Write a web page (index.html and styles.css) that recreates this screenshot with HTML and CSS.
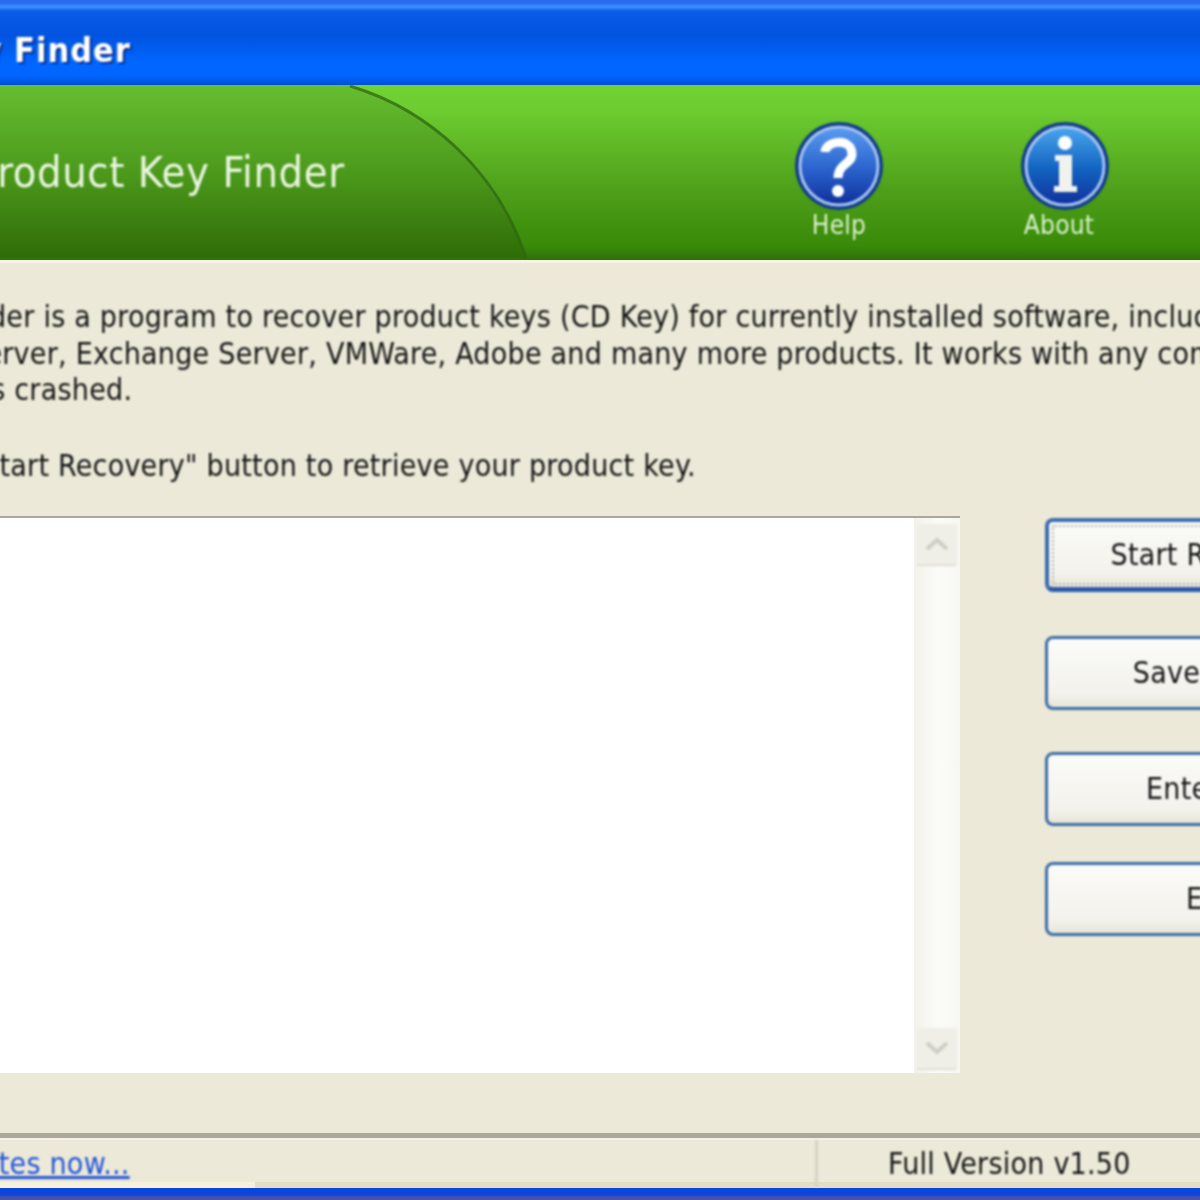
FILE: index.html
```html
<!DOCTYPE html>
<html lang="en">
<head>
    <meta charset="UTF-8">
    <title>Product Key Finder</title>
    <link rel="stylesheet" href="styles.css">
</head>
<body>
    <div class="window">
        <div class="title-bar">
            <span class="title-text">Product Key Finder</span>
        </div>

        <div class="banner">
            <svg class="banner-curve" width="540" height="175" viewBox="0 0 540 175">
                <defs>
                    <linearGradient id="curveFill" x1="0" y1="0" x2="0" y2="1">
                        <stop offset="0" stop-color="#66be30"/>
                        <stop offset="0.5" stop-color="#4c9a1c"/>
                        <stop offset="1" stop-color="#2f6c07"/>
                    </linearGradient>
                </defs>
                <path d="M0 0H350C430 24 498 86 527 173H0Z" fill="url(#curveFill)"/>
                <path d="M350 1C430 25 498 87 526 173" fill="none" stroke="#2f6a12" stroke-opacity="0.75" stroke-width="3"/>
            </svg>
            <span class="banner-title">Product Key Finder</span>
            <div class="banner-actions">
                <div class="action">
                    <svg class="action-icon" width="92" height="92" viewBox="0 0 92 92">
                        <defs>
                            <linearGradient id="helpFill" x1="0" y1="0" x2="0" y2="1">
                                <stop offset="0" stop-color="#5a9cf0"/>
                                <stop offset="0.55" stop-color="#2a62cc"/>
                                <stop offset="1" stop-color="#0f2f9c"/>
                            </linearGradient>
                        </defs>
                        <circle cx="46" cy="46" r="44" fill="#0f3c8c"/>
                        <circle cx="46" cy="46" r="39" fill="url(#helpFill)" stroke="#a9c4f2" stroke-width="3"/>
                        <path d="M32 32C33 20 58 18 59 33C60 44 45 43 45 58" fill="none" stroke="#fff" stroke-width="9"/>
                        <circle cx="45" cy="71" r="6" fill="#fff"/>
                    </svg>
                    <span class="action-label">Help</span>
                </div>
                <div class="action">
                    <svg class="action-icon" width="92" height="92" viewBox="0 0 92 92">
                        <defs>
                            <linearGradient id="aboutFill" x1="0" y1="0" x2="0" y2="1">
                                <stop offset="0" stop-color="#4aa6ee"/>
                                <stop offset="0.55" stop-color="#1162c0"/>
                                <stop offset="1" stop-color="#12309a"/>
                            </linearGradient>
                        </defs>
                        <circle cx="46" cy="46" r="44" fill="#0f3c8c"/>
                        <circle cx="46" cy="46" r="39" fill="url(#aboutFill)" stroke="#a9c4f2" stroke-width="3"/>
                        <circle cx="46" cy="23" r="7" fill="#fff"/>
                        <path d="M36 35H53V66H58V72H35V66H40V41H36Z" fill="#f2f2ec"/>
                    </svg>
                    <span class="action-label about-label">About</span>
                </div>
            </div>
        </div>

        <div class="content">
            <p class="intro">
                <span class="line">Product Key Finder is a program to recover product keys (CD Key) for currently installed software, including</span>
                <span class="line line-2">Windows Server, Exchange Server, VMWare, Adobe and many more products. It works with any computer</span>
                <span class="line line-3">Windows has crashed.</span>
            </p>
            <p class="hint">Click "Start Recovery" button to retrieve your product key.</p>

            <div class="work-area">
                <div class="list-box">
                    <div class="list-body"></div>
                    <div class="scrollbar">
                        <div class="scroll-btn">
                            <svg width="26" height="14" viewBox="0 0 26 14"><path d="M3 12L13 3L23 12" fill="none" stroke="#cfcfc4" stroke-width="4"/></svg>
                        </div>
                        <div class="scroll-btn">
                            <svg width="26" height="14" viewBox="0 0 26 14"><path d="M3 2L13 11L23 2" fill="none" stroke="#cfcfc4" stroke-width="4"/></svg>
                        </div>
                    </div>
                </div>
                <div class="buttons">
                    <button class="btn btn-default">Start Recovery</button>
                    <button class="btn btn-save">Save to File</button>
                    <button class="btn btn-enter">Enter Key</button>
                    <button class="btn btn-exit">Exit</button>
                </div>
            </div>
        </div>

        <div class="status-bar">
            <a class="status-link" href="#">Check for updates now...</a>
            <span class="status-version">Full Version v1.50</span>
        </div>
        <div class="bottom-edge"></div>
    </div>
</body>
</html>
```

FILE: styles.css
```css
* {
    box-sizing: border-box;
    margin: 0;
    padding: 0;
}

body {
    width: 1200px;
    height: 1200px;
    overflow: hidden;
    background: #ece9d8;
    font-family: "DejaVu Sans Condensed", "DejaVu Sans", sans-serif;
    font-stretch: condensed;
    font-size: 30px;
    letter-spacing: 0.25px;
    color: #151515;
}

.window {
    width: 1200px;
    height: 1200px;
    overflow: hidden;
    display: flex;
    flex-direction: column;
    background: #ece9d8;
}

/* the source is an upscaled small screenshot, so text and icons are soft */
.title-text,
.banner-title,
.action-icon,
.action-label,
.line,
.hint,
.scroll-btn,
.btn,
.status-link,
.status-version {
    filter: blur(0.8px);
}

.title-bar {
    height: 85px;
    flex-shrink: 0;
    display: flex;
    align-items: center;
    padding-top: 14px;
    background: linear-gradient(180deg, #2a6cf0 0, #2a6cf0 3px, #3c94ff 7px, #0a5ce8 11px, #0254e0 36px, #0066ff 62px, #0066ff 76px, #0050d4 85px);
}

.title-text {
    margin-left: -218px;
    font-size: 34px;
    font-weight: 700;
    letter-spacing: 1px;
    color: #fff;
    white-space: nowrap;
    text-shadow: 2px 2px 1px #0a2c90;
}

.banner {
    position: relative;
    height: 175px;
    flex-shrink: 0;
    display: flex;
    align-items: flex-start;
    background: linear-gradient(180deg, #72d335 0, #6ccc30 15%, #4f9f1a 60%, #388a08 92%, #2f7008 100%);
}

.banner-curve {
    position: absolute;
    left: 0;
    top: 0;
}

.banner-title {
    position: relative;
    margin: 62px 0 0 -26px;
    font-size: 43px;
    letter-spacing: 0.6px;
    color: #eaf5e0;
    white-space: nowrap;
}

.banner-actions {
    position: relative;
    margin-left: auto;
    margin-right: 89px;
    display: flex;
    gap: 134px;
    padding-top: 35px;
}

.action {
    width: 92px;
    display: flex;
    flex-direction: column;
    align-items: center;
}

.action-label {
    margin-top: -5px;
    font-size: 26px;
    line-height: 36px;
    color: #dcf2d0;
}

.about-label {
    margin-right: 12px;
}

.content {
    flex: 1;
    border-top: 3px solid #f6f3e6;
    padding-top: 36px;
}

.intro,
.hint {
    line-height: 36.7px;
    white-space: nowrap;
}

.line {
    display: block;
    margin-left: -221px;
}

.line-2 {
    margin-left: -163px;
}

.line-3 {
    margin-left: -174px;
}

.hint {
    margin: 39px 0 0 -105px;
}

.work-area {
    display: flex;
    margin-top: 31px;
    gap: 85px;
}

.list-box {
    width: 960px;
    height: 557px;
    flex-shrink: 0;
    display: flex;
    border-top: 2px solid #aca899;
}

.list-body {
    flex: 1;
    background: #fff;
}

.scrollbar {
    width: 46px;
    padding: 6px 3px 3px 3px;
    display: flex;
    flex-direction: column;
    justify-content: space-between;
    background: linear-gradient(90deg, #f2f1ea, #fbfbf8 50%, #f7f7f2);
}

.scroll-btn {
    height: 42px;
    display: flex;
    align-items: center;
    justify-content: center;
    background: #efefe8;
    border-radius: 3px;
    border-bottom: 2px solid #e2e0d2;
}

.buttons {
    display: flex;
    flex-direction: column;
    flex-shrink: 0;
    padding-top: 2px;
}

.btn {
    width: 334px;
    height: 74px;
    font: inherit;
    letter-spacing: inherit;
    color: #151515;
    background: linear-gradient(180deg, #fbfbf8, #f3f2ec 80%, #e8e6da);
    border: 3px solid #3d6ea6;
    border-radius: 8px;
}

.btn-default {
    border-width: 4px 4px 5px;
    border-color: #3c6bb0 #3c6bb0 #2d59ac;
    outline: 2px dotted #b9b7a8;
    outline-offset: -9px;
}

.btn-save {
    margin-top: 44px;
}

.btn-enter {
    margin-top: 42px;
}

.btn-exit {
    margin-top: 36px;
}

.status-bar {
    height: 55px;
    flex-shrink: 0;
    display: flex;
    align-items: center;
    border-top: 5px solid #aca899;
    box-shadow: inset 0 2px 0 #f4f2e6;
    background: linear-gradient(90deg, #f6f1da 255px, #e2dec6 255px) no-repeat bottom / 100% 6px;
}

.status-link {
    width: 815px;
    flex-shrink: 0;
    margin-left: -210px;
    text-align: right;
    padding-right: 648px;
    color: #2256d8;
    white-space: nowrap;
}

.status-version {
    border-left: 3px solid #d6d3c4;
    margin-left: 210px;
    padding: 6px 0 6px 70px;
    white-space: nowrap;
}

.bottom-edge {
    height: 12px;
    flex-shrink: 0;
    background: linear-gradient(180deg, #0a46dc 0, #0a46dc 7px, #4a50a8 9px);
}
```
